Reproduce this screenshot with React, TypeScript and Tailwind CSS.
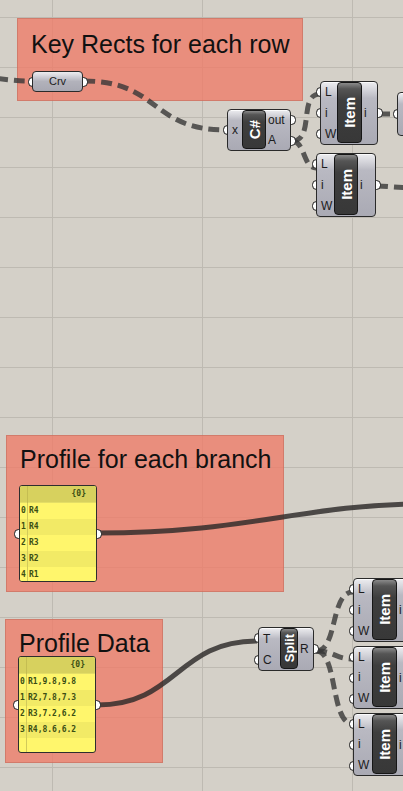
import React from "react"

type Comp = {
    x: number
    y: number
    w: number
    h: number
    leftW: number
    boxW: number
    name: string
    nameSize: string
    inputs: string[]
    outputs: string[]
}

type Panel = {
    x: number
    y: number
    h: number
    rows: string[]
}

const components: Comp[] = [
    { x: 227, y: 109, w: 64, h: 42, leftW: 14, boxW: 24, name: "C#", nameSize: "text-[15px]", inputs: ["x"], outputs: ["out", "A"] },
    { x: 320, y: 81, w: 58, h: 64, leftW: 16, boxW: 25, name: "Item", nameSize: "text-[15px]", inputs: ["L", "i", "W"], outputs: ["i"] },
    { x: 316, y: 153, w: 60, h: 64, leftW: 17, boxW: 24, name: "Item", nameSize: "text-[15px]", inputs: ["L", "i", "W"], outputs: ["i"] },
    { x: 397, y: 92, w: 50, h: 44, leftW: 16, boxW: 24, name: "", nameSize: "text-[15px]", inputs: [""], outputs: [] },
    { x: 258, y: 627, w: 56, h: 44, leftW: 21, boxW: 18, name: "Split", nameSize: "text-[13px]", inputs: ["T", "C"], outputs: ["R"] },
    { x: 353, y: 578, w: 62, h: 64, leftW: 18, boxW: 25, name: "Item", nameSize: "text-[15px]", inputs: ["L", "i", "W"], outputs: ["i"] },
    { x: 353, y: 646, w: 62, h: 63, leftW: 18, boxW: 25, name: "Item", nameSize: "text-[15px]", inputs: ["L", "i", "W"], outputs: ["i"] },
    { x: 353, y: 713, w: 62, h: 63, leftW: 18, boxW: 25, name: "Item", nameSize: "text-[15px]", inputs: ["L", "i", "W"], outputs: ["i"] },
]

const panels: Panel[] = [
    { x: 19, y: 485, h: 97, rows: ["R4", "R4", "R3", "R2", "R1"] },
    { x: 18, y: 656, h: 97, rows: ["R1,9.8,9.8", "R2,7.8,7.3", "R3,7.2,6.2", "R4,8.6,6.2"] },
]

const dashed = [
    "M -20 77 C 5 79, 15 81, 31 81",
    "M 84 81 C 160 81, 150 130, 226 130",
    "M 292 141 C 315 141, 298 94, 320 94",
    "M 292 141 C 305 141, 303 168, 316 168",
    "M 379 114 L 397 114",
    "M 377 186 C 390 186, 395 188, 420 188",
    "M 316 651 C 338 651, 330 592, 353 592",
    "M 316 651 C 335 651, 335 659, 353 659",
    "M 316 651 C 338 651, 330 724, 353 724",
]

const solid = [
    "M 97 533 C 250 533, 300 505, 420 504",
    "M 97 705 C 177 705, 177 641, 257 641",
]

const Port = ({ x, y }: { x: number; y: number }) => (
    <div
        className="absolute w-[9px] h-[10px] rounded-full bg-white border-[1.5px] border-[#1a1a1a]"
        style={{ left: x - 4.5, top: y - 5 }}
    />
)

const Node = ({ n }: { n: Comp }) => {
    const rowY = (i: number, count: number) => n.y + (n.h * (i + 0.5)) / count
    return (
        <>
            {n.inputs.map((_, i) => <Port key={"in" + i} x={n.x} y={rowY(i, n.inputs.length)} />)}
            {n.outputs.map((_, i) => <Port key={"out" + i} x={n.x + n.w} y={rowY(i, n.outputs.length)} />)}
            <div
                className="absolute flex rounded-[4px] border border-[#2a2a2a] bg-[linear-gradient(to_bottom,#ededf0_0%,#d2d2d8_14%,#b9b9c2_26%,#aaaab4_100%)] shadow-[inset_0_1px_0_rgba(255,255,255,0.8)]"
                style={{ left: n.x, top: n.y, width: n.w, height: n.h }}
            >
                <div className="flex flex-col shrink-0" style={{ width: n.leftW }}>
                    {n.inputs.map((label, i) => (
                        <div key={i} className="flex-1 flex items-center pl-[4px] text-[12px] leading-none text-[#1c1c1c]">{label}</div>
                    ))}
                </div>
                {n.name && (
                    <div
                        className="shrink-0 mb-[1px] flex items-center justify-center rounded-[4px] border border-[#161616] bg-[linear-gradient(to_bottom,#8a8a8a_0%,#555555_10%,#3e3e3e_30%,#383838_100%)]"
                        style={{ width: n.boxW }}
                    >
                        <span className={`[writing-mode:vertical-rl] rotate-180 font-bold leading-none text-white ${n.nameSize}`}>{n.name}</span>
                    </div>
                )}
                <div className="flex-1 flex flex-col">
                    {n.outputs.map((label, i) => (
                        <div key={i} className="flex-1 flex items-center pl-[2px] text-[12px] leading-none text-[#1c1c1c]">{label}</div>
                    ))}
                </div>
            </div>
        </>
    )
}

const DataPanel = ({ p }: { p: Panel }) => (
    <>
        <Port x={p.x - 1} y={p.y + p.h / 2} />
        <Port x={p.x + 78} y={p.y + p.h / 2} />
        <div
            className="absolute w-[78px] flex flex-col overflow-hidden rounded-[3px] border border-[#2e2e2e] bg-[#fff66c] font-['DejaVu_Sans_Mono',monospace] text-[8px] font-bold text-[#3b4e14]"
            style={{ left: p.x, top: p.y, height: p.h }}
        >
            <div className="h-[17px] shrink-0 flex items-center justify-end pr-[10px] bg-[#d7d15e] border-b border-[#e4de66]">{"{0}"}</div>
            {p.rows.map((r, i) => (
                <div key={i} className={`h-[16px] shrink-0 flex items-center ${i % 2 === 0 ? "bg-[#fff66c]" : "bg-[#f2ea66]"}`}>
                    <span className="w-[8px] pl-[1px] shrink-0 border-r border-[#d2ca5a] self-stretch flex items-center">{i}</span>
                    <span className="pl-[1px]">{r}</span>
                </div>
            ))}
            <div className="flex-1 flex">
                <span className="w-[8px] shrink-0 border-r border-[#d2ca5a]" />
            </div>
            <div className="absolute left-0 top-0 h-[17px] w-[8px] border-r border-[#c4bd52]" />
        </div>
    </>
)

const App = () => {
    return (
        <div className="relative w-[403px] h-[791px] overflow-hidden bg-[#d4d0c8] bg-[linear-gradient(to_right,#bebab2_1px,transparent_1px),linear-gradient(to_bottom,#bebab2_1px,transparent_1px)] [background-size:150px_50px] [background-position:52px_17px] font-['Liberation_Sans',Arial,sans-serif]">
            {/* groups */}
            <div className="absolute left-[17px] top-[18px] w-[286px] h-[83px] bg-[rgba(240,120,100,0.75)] border border-[rgba(170,90,75,0.35)] pl-[13px] pt-[13px]">
                <div className="text-[25px] leading-none text-[#111]">Key Rects for each row</div>
            </div>
            <div className="absolute left-[6px] top-[435px] w-[278px] h-[157px] bg-[rgba(240,120,100,0.75)] border border-[rgba(170,90,75,0.35)] pl-[13px] pt-[11px]">
                <div className="text-[25px] leading-none text-[#111]">Profile for each branch</div>
            </div>
            <div className="absolute left-[5px] top-[619px] w-[158px] h-[144px] bg-[rgba(240,120,100,0.75)] border border-[rgba(170,90,75,0.35)] pl-[13px] pt-[11px]">
                <div className="text-[25px] leading-none text-[#111]">Profile Data</div>
            </div>

            {/* wires */}
            <svg className="absolute inset-0 pointer-events-none" width={403} height={791}>
                {solid.map((d, i) => (
                    <path key={"s" + i} d={d} fill="none" stroke="rgba(45,42,42,0.82)" strokeWidth={5} />
                ))}
                {dashed.map((d, i) => (
                    <path key={"d" + i} d={d} fill="none" stroke="rgba(55,55,55,0.8)" strokeWidth={5} strokeDasharray="11 6" />
                ))}
            </svg>

            {/* Crv param */}
            <Port x={32} y={81.5} />
            <Port x={83} y={81.5} />
            <div className="absolute left-[32px] top-[71px] w-[51px] h-[21px] flex items-center justify-center rounded-[4px] border border-[#2a2a2a] bg-[linear-gradient(to_bottom,#ededf0_0%,#cfcfd6_25%,#b2b2bb_50%,#a8a8b2_100%)] text-[11px] text-[#1c1c1c]">
                Crv
            </div>

            {components.map((n, i) => <Node key={i} n={n} />)}
            {panels.map((p, i) => <DataPanel key={i} p={p} />)}
        </div>
    )
}

export default App
